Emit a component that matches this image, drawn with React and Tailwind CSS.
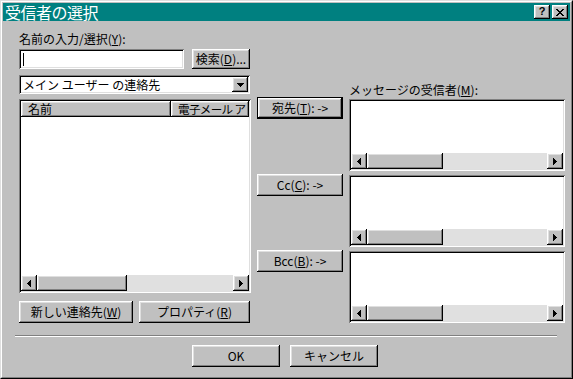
const F = "font-['Noto_Sans_CJK_JP','Noto_Sans',sans-serif]";
const raised =
  "shadow-[inset_-1px_-1px_#000000,inset_1px_1px_#ffffff,inset_-2px_-2px_#808080,inset_2px_2px_#dfdfdf]";
const sunken =
  "shadow-[inset_1px_1px_#808080,inset_-1px_-1px_#ffffff,inset_2px_2px_#000000,inset_-2px_-2px_#dfdfdf]";

function U({ children }) {
  return <span className="underline underline-offset-[1px]">{children}</span>;
}

function Btn({ children, className = "", def = false }) {
  if (def) {
    return (
      <div className={`border border-black bg-[#c0c0c0] ${className}`}>
        <div className={`w-full h-full flex items-center justify-center ${raised}`}>{children}</div>
      </div>
    );
  }
  return (
    <div className={`flex items-center justify-center bg-[#c0c0c0] ${raised} ${className}`}>{children}</div>
  );
}

function ArrowLeft() {
  return (
    <svg width="4" height="7" viewBox="0 0 4 7" shapeRendering="crispEdges">
      <rect x="0" y="3" width="1" height="1" fill="#000" />
      <rect x="1" y="2" width="1" height="3" fill="#000" />
      <rect x="2" y="1" width="1" height="5" fill="#000" />
      <rect x="3" y="0" width="1" height="7" fill="#000" />
    </svg>
  );
}
function ArrowRight() {
  return (
    <svg width="4" height="7" viewBox="0 0 4 7" shapeRendering="crispEdges">
      <rect x="0" y="0" width="1" height="7" fill="#000" />
      <rect x="1" y="1" width="1" height="5" fill="#000" />
      <rect x="2" y="2" width="1" height="3" fill="#000" />
      <rect x="3" y="3" width="1" height="1" fill="#000" />
    </svg>
  );
}
function ArrowDown() {
  return (
    <svg width="7" height="4" viewBox="0 0 7 4" shapeRendering="crispEdges">
      <rect x="0" y="0" width="7" height="1" fill="#000" />
      <rect x="1" y="1" width="5" height="1" fill="#000" />
      <rect x="2" y="2" width="3" height="1" fill="#000" />
      <rect x="3" y="3" width="1" height="1" fill="#000" />
    </svg>
  );
}
function CloseGlyph() {
  const rows = [
    [[0, 2], [6, 2]],
    [[1, 2], [5, 2]],
    [[2, 4]],
    [[3, 2]],
    [[2, 4]],
    [[1, 2], [5, 2]],
    [[0, 2], [6, 2]],
  ];
  return (
    <svg width="8" height="7" viewBox="0 0 8 7" shapeRendering="crispEdges">
      {rows.map((r, y) =>
        r.map(([x, w], i) => <rect key={`${y}-${i}`} x={x} y={y} width={w} height="1" fill="#000" />)
      )}
    </svg>
  );
}

function HScroll({ thumbClass }) {
  return (
    <div className="flex h-[16px] bg-[#e0e0e0] shrink-0">
      <Btn className="w-[16px] h-[16px] shrink-0">
        <ArrowLeft />
      </Btn>
      <div className={`h-[16px] shrink-0 bg-[#c0c0c0] ${raised} ${thumbClass}`} />
      <div className="flex-1" />
      <Btn className="w-[16px] h-[16px] shrink-0">
        <ArrowRight />
      </Btn>
    </div>
  );
}

function RecipList({ className = "" }) {
  return (
    <div className={`bg-white p-[2px] flex flex-col ${sunken} ${className}`}>
      <div className="flex-1" />
      <HScroll thumbClass="w-[76px]" />
    </div>
  );
}

export default function App() {
  return (
    <div className={`w-[573px] h-[379px] bg-[#c0c0c0] text-black text-[12px] leading-[14px] ${F}`}>
      <div className="w-full h-full border border-t-[#dfdfdf] border-l-[#dfdfdf] border-r-black border-b-black">
        <div className="w-full h-full border border-t-white border-l-white border-r-[#808080] border-b-[#808080] p-[1px] flex flex-col">
          {/* Title bar */}
          <div className="h-[18px] shrink-0 bg-[#008080] flex items-center justify-between pl-[2px] pr-[2px]">
            <span className="text-white text-[16px] leading-[18px] tracking-[-0.5px]">受信者の選択</span>
            <div className="flex gap-[2px]">
              <Btn className="w-[16px] h-[14px]">
                <span className="text-[11px] leading-[11px] font-bold font-['Liberation_Sans',sans-serif] mt-[-1px]">?</span>
              </Btn>
              <Btn className="w-[16px] h-[14px]">
                <CloseGlyph />
              </Btn>
            </div>
          </div>

          {/* Main area */}
          <div className="flex pl-[16px]">
            {/* Left column */}
            <div className="w-[232px] pt-[10px] flex flex-col">
              <div className="h-[16px] leading-[16px] whitespace-nowrap">
                名前の入力/選択(<U>Y</U>):
              </div>
              <div className="mt-[2px] h-[20px] flex">
                <div className={`w-[165px] h-[20px] bg-white flex items-center pl-[4px] ${sunken}`}>
                  <div className="w-[1px] h-[13px] bg-black" />
                </div>
                <Btn className="ml-[8px] w-[58px] h-[20px]">
                  <span>
                    検索(<U>D</U>)...
                  </span>
                </Btn>
              </div>
              <div className={`mt-[6px] w-[231px] h-[19px] bg-white p-[2px] flex ${sunken}`}>
                <div className="flex-1 pl-[2px] leading-[15px] whitespace-nowrap">メイン ユーザー の連絡先</div>
                <Btn className="w-[16px] h-[15px]">
                  <ArrowDown />
                </Btn>
              </div>
              <div className={`mt-[5px] h-[194px] bg-white p-[2px] flex flex-col overflow-hidden ${sunken}`}>
                <div className="h-[16px] flex shrink-0 overflow-hidden">
                  <div className={`w-[150px] shrink-0 h-[16px] bg-[#c0c0c0] pl-[7px] leading-[16px] ${raised}`}>名前</div>
                  <div className={`flex-1 h-[16px] bg-[#c0c0c0] pl-[7px] leading-[16px] whitespace-nowrap text-[11.5px] tracking-[-0.6px] ${raised}`}>
                    電子メール ア
                  </div>
                </div>
                <div className="flex-1" />
                <HScroll thumbClass="w-[90px]" />
              </div>
              <div className="mt-[8px] h-[22px] flex gap-[6px]">
                <Btn className="w-[114px] h-[22px]">
                  <span>
                    新しい連絡先(<U>W</U>)
                  </span>
                </Btn>
                <Btn className="w-[111px] h-[22px]">
                  <span>
                    プロパティ(<U>R</U>)
                  </span>
                </Btn>
              </div>
            </div>

            {/* Middle column */}
            <div className="ml-[6px] w-[86px] pt-[76px] flex flex-col">
              <Btn def className="h-[22px]">
                <span>
                  宛先(<U>T</U>): -&gt;
                </span>
              </Btn>
              <Btn className="mt-[55px] h-[22px]">
                <span>
                  Cc(<U>C</U>): -&gt;
                </span>
              </Btn>
              <Btn className="mt-[54px] h-[22px]">
                <span>
                  Bcc(<U>B</U>): -&gt;
                </span>
              </Btn>
            </div>

            {/* Right column */}
            <div className="ml-[6px] w-[216px] pt-[61px] flex flex-col">
              <div className="h-[16px] leading-[16px] whitespace-nowrap">
                メッセージの受信者(<U>M</U>):
              </div>
              <RecipList className="mt-[1px] h-[72px]" />
              <RecipList className="mt-[4px] h-[72px]" />
              <RecipList className="mt-[4px] h-[72px]" />
            </div>
          </div>

          {/* Separator */}
          <div className="mt-[12px] ml-[12px] w-[542px] h-[2px] border-t border-t-[#808080] border-b border-b-white" />

          {/* Footer buttons */}
          <div className="mt-[8px] pl-[189px] flex gap-[10px]">
            <Btn className="w-[88px] h-[22px]">
              <span>OK</span>
            </Btn>
            <Btn className="w-[88px] h-[22px]">
              <span>キャンセル</span>
            </Btn>
          </div>
        </div>
      </div>
    </div>
  );
}
